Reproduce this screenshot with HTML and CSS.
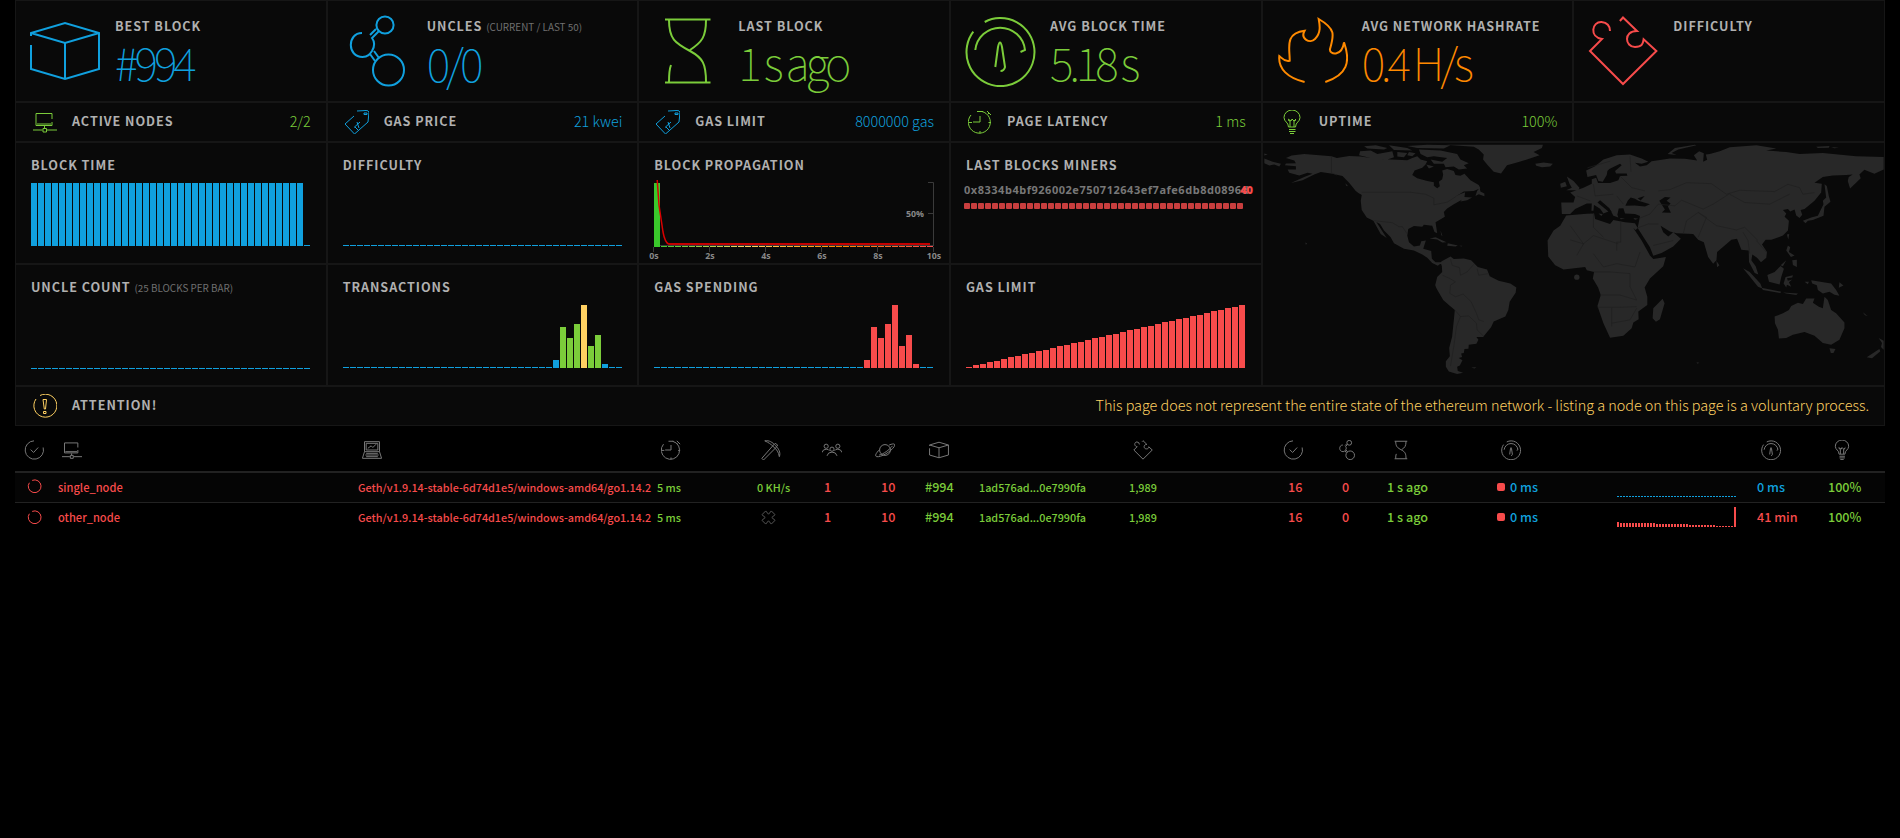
FILE: index.html
```
<!DOCTYPE html>
<html lang="en">
<head>
<meta charset="utf-8">
<title>Ethereum Network Status</title>
<link rel="stylesheet" href="styles.css">
</head>
<body>
<svg class="defs" aria-hidden="true">
  <symbol id="cube" viewBox="0 0 72 72"><path d="M2 21V18L36 8 70 18V54L36 64 2 54V30M2 18L36 28 70 18M36 28V64"/></symbol>
  <symbol id="uncles" viewBox="0 0 72 72"><circle cx="44" cy="10" r="8.6"/><path d="M21 18C6 18 6 42 21.500 42C27 42 29 39 31 36C34 31 34 27 31 23L38 16M29 20L35 14M29 39L34 46M33 36L38 43"/><circle cx="47.500" cy="55" r="15.500"/></symbol>
  <symbol id="hourglass" viewBox="0 0 72 72"><path d="M13 4.500H58.500M13 67.500H58.500M17 5C17 24 23 28 38 36C51 43 54 49 54 67M54 5C54 22 50 27 38 35M17 67C17 60 17 55 19 50"/></symbol>
  <symbol id="gauge" viewBox="0 0 72 72"><path d="M20.700 7A34 34 0 1 1 9.300 16.700M11.300 35A25 25 0 0 1 61 35L56.500 37M31.300 52L34 32Q36 23 38 32L41 52Q40 56 36.500 56"/></symbol>
  <symbol id="flame" viewBox="0 0 72 72"><path d="M28.600 67C12 63 2 54 3.300 41C6 43 8 47 13.700 45.700C14 34 8 18 28.600 15.700C24 24 34 29 39 24C45 18 44 11 42.700 4C60 14 58 20 54 34C53 40 66 42 68 27.300C75 47 71 60 49.300 67"/></symbol>
  <symbol id="puzzle" viewBox="0 0 72 72"><path d="M32.900 6L36 2.500 50 16C36 16 38 32 48 32C55 32 56 29 56.600 24.300L69.400 36 36 69 3 36 15 24C2 22 5 6.500 14.500 7Q23 8 23 16"/></symbol>
  <symbol id="node" viewBox="0 0 24 24"><path d="M19 9V3.500H3V15.500H19V12M4 14H18M11.500 16V18M0 20H9.500M14 20H24"/><rect x="10" y="18.500" width="3.500" height="3.500"/></symbol>
  <symbol id="tag" viewBox="0 0 24 24"><path d="M9 6L0 14 9.500 24 23 12 24 2Q23.500 .5 21 .5L12 1M19 4.500H22V3H19V4.500M9 17.500L15 12M12 12L14 18M10 17L13 20"/></symbol>
  <symbol id="clock" viewBox="0 0 24 24"><path d="M3 5A11 11 0 1 0 14 1.500M9 1.500H15M19 1L23 5M20 4L21 3M12 6V12H5M12 21V23.500M20.500 12.500H23M1 12.500H4"/></symbol>
  <symbol id="bulb" viewBox="0 0 24 24"><path d="M8.500 17C8.500 12 4 12 4 7.500A8 7.500 0 0 1 20 7.500C20 12 15.500 12 15.500 17ZM9 19.500H15.500M9 21.500H15.500M10 23.500H14M8 10L10 11V17M16 10L14 11V17M8 9L11 11 12 9 14 11 16 9"/></symbol>
  <symbol id="warn" viewBox="0 0 24 24"><path d="M7 1.500A11.500 11.500 0 1 1 3 5M10 5.500H13.500L12.500 15H11.300ZM10.500 17.500H13V19.500H10.500Z"/></symbol>
  <symbol id="check" viewBox="0 0 24 24"><path d="M12 1A11 11 0 1 0 23 9M8 11.500L11.500 15 17 9"/></symbol>
  <symbol id="laptop" viewBox="0 0 24 24"><path d="M3 2H21V14H3ZM5 4H19V12H5ZM7 10L11 7 13 9 17 5M3 14L.5 22H23.500L21 14M5 16H19M4 18H20M5 20H19"/></symbol>
  <symbol id="pick" viewBox="0 0 24 24"><path d="M4.500 1C10 0 14 3 17 6.500C21 10 24 15 22 20C21 14 19 12 15.500 8.500C12 5 9 3 4.500 1M15 6L1 22 3 24 18 9M15 6L17 4 20 6 18 9"/></symbol>
  <symbol id="people" viewBox="0 0 24 24"><circle cx="5" cy="7.500" r="2.500"/><circle cx="19" cy="7.500" r="2.500"/><circle cx="12" cy="11" r="2.500"/><path d="M0 15Q1 11 5 11Q8 11 9 13M24 15Q23 11 19 11Q16 11 15 13M6 19Q7 14.500 12 14.500Q17 14.500 18 19"/></symbol>
  <symbol id="planet" viewBox="0 0 24 24"><circle cx="12" cy="12" r="6.500"/><path d="M17 6C22 4 25 4 23 8C19 14 7 21 2 20C-1 19 2 15 5 12M21 7C17 12 10 17 5 18"/></symbol>
  <symbol id="ring" viewBox="0 0 16 16"><path d="M5.500 1.500A6.800 6.800 0 1 1 2.500 4"/></symbol>
  <symbol id="cross" viewBox="0 0 16 16"><path d="M5 1L8 4.500 11 1 15 5 11.500 8 15 11 11 15 8 11.500 5 15 1 11 4.500 8 1 5Z"/></symbol>
</svg>

<main class="page">
  <section class="stats">
    <div class="cell big blue"><svg class="ic"><use href="#cube"/></svg><div><h3>BEST BLOCK</h3><p class="v1">#994</p></div></div>
    <div class="cell big blue"><svg class="ic"><use href="#uncles"/></svg><div><h3>UNCLES <small>(CURRENT / LAST 50)</small></h3><p class="v2">0/0</p></div></div>
    <div class="cell big green"><svg class="ic"><use href="#hourglass"/></svg><div><h3>LAST BLOCK</h3><p class="v3">1 s ago</p></div></div>
    <div class="cell big green"><svg class="ic"><use href="#gauge"/></svg><div><h3>AVG BLOCK TIME</h3><p class="v4">5.18 s</p></div></div>
    <div class="cell big orange"><svg class="ic"><use href="#flame"/></svg><div><h3>AVG NETWORK HASHRATE</h3><p class="v5">0.4 H/s</p></div></div>
    <div class="cell big red"><svg class="ic"><use href="#puzzle"/></svg><div><h3>DIFFICULTY</h3></div></div>

    <div class="cell line green"><svg><use href="#node"/></svg><h3>ACTIVE NODES</h3><p>2/2</p></div>
    <div class="cell line blue"><svg><use href="#tag"/></svg><h3>GAS PRICE</h3><p>21 kwei</p></div>
    <div class="cell line blue"><svg><use href="#tag"/></svg><h3>GAS LIMIT</h3><p>8000000 gas</p></div>
    <div class="cell line green"><svg><use href="#clock"/></svg><h3>PAGE LATENCY</h3><p>1 ms</p></div>
    <div class="cell line green"><svg><use href="#bulb"/></svg><h3>UPTIME</h3><p>100%</p></div>
    <div class="cell line"></div>

    <div class="cell chart"><h3>BLOCK TIME</h3><div class="bars" data-set="time"></div></div>
    <div class="cell chart"><h3>DIFFICULTY</h3><div class="bars" data-set="flat"></div></div>
    <div class="cell chart"><h3>BLOCK PROPAGATION</h3>
      <svg class="prop" viewBox="0 0 300 84">
        <rect x="11" y="6" width="6" height="64" fill="#3ac82b"/>
        <g id="prop-dashes"></g>
        <path class="axis" d="M10.500 70V75M66.500 70V75M122.500 70V75M178.500 70V75M234.500 70V75M290.500 70V75M285 5.500H290.500V69M285 36.500H290M285 68.500H290.500M17 68.500H290"/>
        <path d="M14.200 3L16 28L20 55Q22 66 26 67.200" fill="none" stroke="#d90000" stroke-width="1.500"/>
        <path d="M26 67H287" stroke="#c40000" stroke-width="2"/>
        <g class="tick"><text x="11" y="82">0s</text><text x="67" y="82">2s</text><text x="123" y="82">4s</text><text x="179" y="82">6s</text><text x="235" y="82">8s</text><text x="291" y="82">10s</text><text x="272" y="40">50%</text></g>
      </svg>
    </div>
    <div class="cell chart"><h3>LAST BLOCKS MINERS</h3>
      <div class="miner"><span>0x8334b4bf926002e750712643ef7afe6db8d0896d</span><b>40</b></div>
      <div class="squares" id="squares"></div>
    </div>
    <div class="cell map">
      <svg viewBox="6 5 1869 732" preserveAspectRatio="none">
        <path class="land" d="M75 50L92 43 130 38 212 45 228 50 265 44 300 46 330 50 370 54 410 56 440 57 455 50 470 45 480 55 500 60 495 70 485 80 462 88 455 102 470 112 500 120 520 124 520 134 530 142 538 136 535 122 545 115 548 100 545 88 560 84 580 90 585 102 600 104 612 98 630 118 655 132 660 142 640 150 610 152 600 158 583 168 598 160 614 154 612 168 635 170 620 178 600 182 604 177 580 190 560 203 550 214 553 228 525 245 530 278 522 274 515 255 490 252 485 258 460 256 443 265 440 285 445 305 460 318 478 315 482 302 496 300 488 325 512 332 514 355 525 366 545 366 532 376 515 368 500 352 485 342 460 330 430 325 400 308 390 290 370 270 358 250 347 244 378 292 360 280 348 258 338 240 318 230 303 208 300 180 303 162 285 150 265 125 245 105 215 98 180 93 160 100 125 118 90 126 130 108 155 98 140 95 115 103 85 95 80 85 105 85 105 75 72 72 75 67 105 66 100 58Z
        M10 52L35 62 60 68 55 76 40 70 25 73 10 66ZM10 37L20 40 10 43ZM120 295L126 300ZM133 306L139 309 135 313ZM285 150L305 158 308 164 295 158ZM254 127L262 136 256 134Z
        M298 30L330 28 350 38 395 30 400 48 380 55 330 50 295 42ZM310 15L345 12 380 20 370 25 320 22ZM385 12L440 20 455 28 400 26ZM410 32L440 35 430 48 410 46ZM445 32L465 36 455 45 440 42ZM440 14L500 10 570 12 550 22 470 20ZM475 25L540 28 590 38 600 55 625 66 610 72 620 82 595 85 580 76 555 78 550 68 520 68 510 55 545 62 560 50 520 45 500 48 480 38ZM497 70L520 76 505 82ZM650 150L658 140 660 152 672 158 672 166 655 160 645 165ZM507 294L525 290 558 305 545 306 530 297ZM562 308L592 315 585 318 560 316ZM596 316H606L603 318ZM540 270L546 287 542 283Z
        M555 10H848L845 20 820 32 838 42 800 55 770 64 740 72 722 97 700 92 682 72 668 55 670 40 655 25 640 16ZM825 68L850 64 878 68 870 76 845 78 828 74Z
        M540 366L545 362 570 348 580 356 610 354 632 360 652 380 680 388 688 408 715 422 750 430 768 442 766 458 748 485 744 510 735 530 700 545 692 562 668 592 648 592 654 600 648 612 625 615 624 627 612 628 610 640 602 642 605 652 595 655 606 662 598 678 590 682 592 695 608 700 590 704 565 696 556 682 556 665 568 650 566 625 575 590 583 510 565 495 548 480 528 445 524 435 530 410 545 395 544 378ZM632 684L648 683 642 687Z"/>
        <path class="border" d="M212 46V95L228 102M303 154H450L495 160 520 172V192L560 184 585 168M340 240L395 246 415 258 425 258 440 280M570 356L575 375 597 382 600 405 620 395 640 372M546 405L568 415 585 425 570 435 568 460 585 470 608 462 632 485 648 520 655 540 670 545M583 510L600 530 588 560 580 620 570 680M600 530L625 528 648 550 650 570 670 590M650 385L655 405 685 400M870 300L885 300 910 262 960 298M920 270V330L870 335"/>
        <g transform="translate(930 0)">
        <path class="land" d="M-27 185L10 185 15 168 0 155 40 140 65 128 65 115 78 110 84 126 120 126 145 118 150 105 172 104 170 97 138 97 135 90 155 72 150 68 118 84 112 90 110 102 98 122 85 120 78 102 52 108 48 88 75 75 100 55 140 42 180 40 215 52 235 62 215 68 195 65 210 76 230 72 245 60 300 52 345 53 382 58 372 42 388 30 402 36 400 62 412 56 408 40 420 38 450 30 480 18 560 12 620 22 590 28 650 32 690 38 760 35 860 45 943 47 943 85 915 98 885 86 870 100 874 112 842 143 835 120 838 108 850 100 830 102 790 103 760 108 735 125 757 128 755 155 735 180 705 205 693 208 698 222 690 232 680 224 675 206 662 212 655 205 640 208 650 218 645 228 658 240 655 270 640 285 605 298 588 298 577 312 592 335 590 352 574 366 562 352 548 342 545 360 558 378 566 403 555 398 538 365 537 330 515 328 502 295 485 298 442 335 440 360 430 370 415 350 402 305 385 298 370 280 320 278 300 273 272 255 280 275 295 288 310 275 333 295 310 318 275 338 250 346 240 320 203 262 210 226 195 220 165 218 160 202 146 203 142 222 145 230 130 225 118 202 90 178 82 185 115 212 100 218 90 204 65 188 50 188 15 205 0 220 -25 220Z
        M-12 224L50 219 72 218 75 235 120 250 130 238 165 245 195 248 203 262 197 268 190 262 215 300 240 345 250 356 288 350 280 378 240 415 224 442 232 470 232 495 205 515 206 538 190 548 185 565 160 588 120 594 100 550 82 498 92 465 84 442 68 415 72 395 50 390 45 380 0 385 -20 388 -45 375 -66 348 -68 300 -50 270 -30 255Z
        M278 476L284 490 270 538 258 546 248 535 250 505ZM440 362L449 375 442 381ZM-10 106L10 120 28 140 25 148 -12 148 5 140 -2 128ZM-30 128L-15 122 -10 136 -28 140ZM293 38L315 20 375 10 380 12 325 25 305 35 320 41ZM740 16L780 14 778 19 745 20ZM785 17L808 19 795 21ZM765 130L772 135 778 165 783 183 765 198 762 225 730 238 715 240 708 248 700 240 725 230 745 225 755 205 762 190 760 180 770 170ZM652 282L659 280 656 297ZM655 315L662 320 658 335 675 345 664 350 650 330ZM668 360L682 358 682 380 670 374ZM633 375L650 360 640 378ZM593 404L615 395 633 377 643 385 635 410 630 433 598 425ZM520 384L540 395 572 430 578 445 565 440 545 415ZM575 443L635 455 632 459 580 450ZM640 457L685 460 680 465 650 460ZM648 410L670 405 668 412 652 414 655 422 668 418 658 426 665 440 652 434 650 442 642 430ZM688 405L693 412ZM705 425L718 425 715 432ZM725 420L785 430 800 450 810 467 795 464 780 455 760 460 745 450 742 435 728 430ZM810 426L822 436 808 443ZM830 444L850 455ZM855 460L870 468ZM880 517L895 528 887 526ZM65 187H72L70 210H64ZM150 232L165 234 152 236ZM190 232L205 234 195 237ZM85 218L98 220 94 226Z
        M615 530L640 520 658 510 665 498 685 488 700 492 710 475 735 475 730 488 748 500 760 505 765 470 775 480 785 510 800 520 825 548 825 565 810 600 785 615 760 610 735 588 705 577 670 585 650 595 628 596 625 570 616 550ZM780 626L798 628 792 640 784 640ZM928 595L943 603 943 630 935 622 938 610ZM930 628L933 635 908 656 892 653ZM380 668L389 670 383 673Z"/>
        <circle class="land" cx="20" cy="411" r="8"/>
        <path class="sea" d="M166 195L173 180 182 170 195 174 205 180 240 190 225 197 195 194ZM203 172L224 165 212 179ZM268 180L285 168 302 170 290 180 302 188 294 197 303 216 276 215 285 206ZM115 204L125 212 118 215Z"/>
        <path class="border" d="M265 150L300 146 350 125 425 128 470 160 510 148 615 152 655 130 690 140 700 160 735 155M480 160L525 185 600 190 660 160M265 190L315 195 335 178 400 205 430 190 480 158M385 215L440 255 500 268 525 260 565 300M340 280L350 240 385 215 410 230 385 290M540 340L535 300 520 275M560 300L590 335M70 218V260L100 290M152 242V305H140V330M0 298L40 310 70 285 145 310M0 255L40 310 20 345M70 340L100 380 140 370 195 380 210 335M70 395L120 395 180 400V440L200 480 150 465 90 465M82 502H150L200 500M125 504V560M125 550L180 540 200 505M150 105L185 140 225 150M70 130L75 165 130 160M20 165L60 180M140 165L160 190M183 92L180 45M52 80L120 60M202 262L235 250 265 250M210 232L240 220 265 190M250 315L310 300"/>
        </g>
      </svg>
    </div>
    <div class="cell chart"><h3>UNCLE COUNT <small>(25 BLOCKS PER BAR)</small></h3><div class="bars" data-set="flat"></div></div>
    <div class="cell chart"><h3>TRANSACTIONS</h3><div class="bars" data-set="tx"></div></div>
    <div class="cell chart"><h3>GAS SPENDING</h3><div class="bars" data-set="gas"></div></div>
    <div class="cell chart"><h3>GAS LIMIT</h3><div class="bars" data-set="limit"></div></div>

    <div class="cell line wide yellow"><svg><use href="#warn"/></svg><h3>ATTENTION!</h3><p>This page does not represent the entire state of the ethereum network - listing a node on this page is a voluntary process.</p></div>
  </section>

  <section class="nodes">
    <div class="row head">
      <div class="c1"><svg><use href="#check"/></svg></div><div><svg><use href="#node"/></svg></div><div><svg><use href="#laptop"/></svg></div><div><svg><use href="#clock"/></svg></div><div><svg><use href="#pick"/></svg></div><div class="h-peers"><svg><use href="#people"/></svg></div><div class="h-pend"><svg><use href="#planet"/></svg></div><div><svg><use href="#cube"/></svg></div><div></div><div><svg><use href="#puzzle"/></svg></div><div class="h-tx"><svg><use href="#check"/></svg></div><div class="h-unc"><svg><use href="#uncles"/></svg></div><div><svg><use href="#hourglass"/></svg></div><div><svg><use href="#gauge"/></svg></div><div></div><div><svg><use href="#gauge"/></svg></div><div><svg><use href="#bulb"/></svg></div>
    </div>
    <div class="row odd">
      <div class="red c1"><svg><use href="#ring"/></svg></div><div class="red name">single_node</div><div class="red sm type">Geth/v1.9.14-stable-6d74d1e5/windows-amd64/go1.14.2</div><div class="green sm">5 ms</div><div class="green sm mine">0 KH/s</div><div class="red peers">1</div><div class="red pend">10</div><div class="green">#994</div><div class="green sm hash">1ad576ad...0e7990fa</div><div class="green sm">1,989</div><div class="red tx">16</div><div class="red unc">0</div><div class="green">1 s ago</div><div class="blue prp"><i></i>0 ms</div><div class="hist blue" data-hist="a"></div><div class="blue">0 ms</div><div class="green">100%</div>
    </div>
    <div class="row">
      <div class="red c1"><svg><use href="#ring"/></svg></div><div class="red name">other_node</div><div class="red sm type">Geth/v1.9.14-stable-6d74d1e5/windows-amd64/go1.14.2</div><div class="green sm">5 ms</div><div class="off"><svg><use href="#cross"/></svg></div><div class="red peers">1</div><div class="red pend">10</div><div class="green">#994</div><div class="green sm hash">1ad576ad...0e7990fa</div><div class="green sm">1,989</div><div class="red tx">16</div><div class="red unc">0</div><div class="green">1 s ago</div><div class="blue prp"><i></i>0 ms</div><div class="hist red" data-hist="b"></div><div class="red">41 min</div><div class="green">100%</div>
    </div>
  </section>
</main>
<script src="charts.js"></script>
</body>
</html>
```
FILE: styles.css
```
* { box-sizing: border-box; }
body { margin: 0; background: #000; color: #aaa; font-family: "Noto Sans CJK SC", "Noto Sans", sans-serif; font-size: 12.600px; }
h3, p { margin: 0; }
svg { fill: none; stroke: currentColor; display: block; }
symbol path, symbol circle, symbol rect { vector-effect: non-scaling-stroke; }
.defs { display: none; }
.page { padding: 0 15px; }
.blue { color: #10a0de; }
.green { color: #7bcc3a; }
.orange { color: #ff8a00; }
.red { color: #f74b4b; }
.yellow { color: #ffd162; }

.stats { display: grid; grid-template-columns: repeat(6, 1fr); grid-template-rows: 102px 40px 122px 122px 40px; }
.cell { background: #090909; border: 1px solid #161616; min-width: 0; }
h3 { color: #b0b0b0; font-size: 12.600px; font-weight: 700; letter-spacing: .95px; line-height: 20px; white-space: nowrap; }
h3 small { color: #707070; font-size: 9.900px; font-weight: 400; letter-spacing: 0; }

.big { display: flex; padding: 14px 0 0 13px; }
.big .ic { width: 72px; height: 72px; stroke-width: 2; flex: none; }
.big > div { padding: 1px 0 0 14px; }
.big p { font-size: 45px; font-weight: 100; line-height: 50px; margin-top: 1px; letter-spacing: -4px; white-space: nowrap; }

.line { display: flex; align-items: center; padding: 0 15px 0 17px; }
.line svg { width: 24px; height: 24px; stroke-width: 1; flex: none; }
.line h3 { margin: -2px 0 0 15px; }
.line p { margin: -2px 0 0 auto; font-size: 14.400px; font-weight: 300; line-height: 20px; letter-spacing: -.02px; white-space: nowrap; }
.wide { grid-column: 1 / -1; }

.chart { padding: 12px 0 0 15px; overflow: hidden; }
.bars { display: flex; align-items: flex-end; gap: 1px; height: 63px; margin-top: 8px; }
.bars i { width: 6px; flex: none; }
.prop { width: 300px; height: 84px; margin: 2px 0 0 -11px; }
.prop rect { stroke: none; }
.prop .axis { stroke: #3a3a3a; }
.tick { fill: #888; stroke: none; font-family: "Open Sans", sans-serif; font-size: 8.800px; font-weight: 700; text-anchor: middle; }
.miner { display: flex; margin: 7px 0 0 -2px; font-family: "Noto Sans", sans-serif; font-size: 11px; font-weight: 700; line-height: 16px; letter-spacing: .52px; color: #777; white-space: nowrap; }
.miner b { color: #f74b4b; margin-left: -9px; letter-spacing: 0; }
.squares { display: flex; gap: 1px; margin: 5px 0 0 -2px; }
.squares i { width: 6px; height: 6px; background: #c83e3e; border-radius: 1px; }
.map { grid-column: 5 / 7; grid-row: 3 / 5; }
.map svg { width: 100%; height: 100%; stroke: none; }
.land { fill: #282828; }
.sea { fill: #090909; }
.border { stroke: #1e1e1e; stroke-width: 2; }

.row { display: grid; grid-template-columns: 38px 300px 299px 100px 65px 55px 48px 54px 150px 156px 57px 45px 110px 120px 140px 71px 1fr; height: 30px; align-items: center; white-space: nowrap; border-bottom: 1px solid #222; font-weight: 500; }
.row > div { padding: 0 0 2px 5px; line-height: 20px; }
.row:last-child { border-bottom: 0; }
.row.odd { background: #050505; }
.head { height: 47px; border-bottom: 2px solid #222; color: #777; padding-top: 5px; }
.head > div { padding-left: 9px; }
.head svg { width: 20px; height: 20px; stroke-width: 1; }
.head .h-peers { padding-left: 5px; }
.head .h-pend { padding-left: 3px; }
.head .h-tx { padding-left: 3px; }
.head .h-unc { padding-left: 0; }
.row .c1 { padding-left: 12px; }
.row .c1 svg { width: 15px; height: 15px; }
.row.head .c1 { padding-left: 9px; }
.row.head .c1 svg { width: 20px; height: 20px; }
.name { font-size: 11.100px; }
.sm { font-size: 10.800px; }
.off { color: #555; }
.off svg { width: 15px; height: 15px; margin-left: 4px; }
.row .peers { padding-left: 7px; }
.row .pend { padding-left: 9px; }
.row .tx { padding-left: 8px; }
.prp { display: flex; align-items: center; }
.prp i { width: 8px; height: 8px; border-radius: 2px; background: #f74b4b; margin-right: 5px; }
.row .hist { display: flex; gap: 1px; align-items: flex-end; height: 20px; align-self: end; margin-bottom: 5px; padding-bottom: 0; }
.hist i { width: 2px; background: currentColor; }
.row:last-child .hist { margin-bottom: 6px; }
```
FILE: charts.js
```
const BLUE = '#10a0de', GREEN = '#7bcc3a', YELLOW = '#ffd162', RED = '#f74b4b';
const burst = [8, 41, 30, 44, 63, 22, 33, 4];
const at = i => (i >= 30 && i < 38 ? burst[i - 30] : 1);
const sets = {
  time: i => [i < 39 ? 63 : 1, BLUE],
  flat: () => [1, BLUE],
  tx: i => [at(i), at(i) === 63 ? YELLOW : at(i) > 20 ? GREEN : BLUE],
  gas: i => [at(i), at(i) > 1 ? RED : BLUE],
  limit: i => [Math.max(1, Math.round(1 + i * 1.59)), RED]
};
document.querySelectorAll('.bars').forEach(el => {
  for (let i = 0; i < 40; i++) {
    const [h, c] = sets[el.dataset.set](i);
    const bar = document.createElement('i');
    bar.style.height = h + 'px';
    bar.style.background = c;
    el.append(bar);
  }
});
const squares = document.getElementById('squares');
for (let i = 0; i < 40; i++) squares.append(document.createElement('i'));

const pings = {
  a: () => 1,
  b: i => (i === 0 ? 5 : i < 13 ? 4 : i < 24 ? 3 : i < 33 ? 2 : i < 39 ? 1 : 20)
};
document.querySelectorAll('.hist').forEach(el => {
  for (let i = 0; i < 40; i++) {
    const bar = document.createElement('i');
    bar.style.height = pings[el.dataset.hist](i) + 'px';
    el.append(bar);
  }
});

const stops = [[58, 200, 43], [255, 209, 98], [255, 138, 0], [247, 75, 75]];
const dashes = document.getElementById('prop-dashes');
for (let i = 1; i < 40; i++) {
  const t = (i / 39) * 3, k = Math.min(2, Math.floor(t)), f = t - k;
  const rgb = stops[k].map((v, n) => Math.round(v + (stops[k + 1][n] - v) * f));
  const r = document.createElementNS('http://www.w3.org/2000/svg', 'rect');
  r.setAttribute('x', 11 + i * 7);
  r.setAttribute('y', 69);
  r.setAttribute('width', 6);
  r.setAttribute('height', 1);
  r.setAttribute('fill', `rgb(${rgb})`);
  dashes.append(r);
}
```
